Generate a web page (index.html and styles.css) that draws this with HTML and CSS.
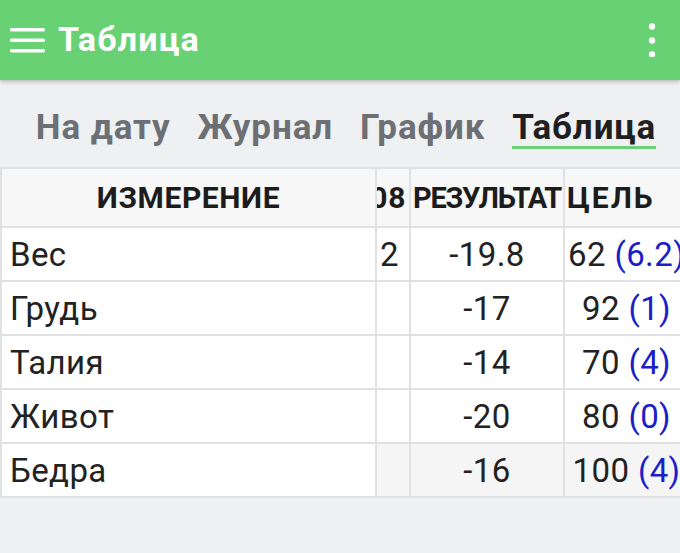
FILE: index.html
```html
<!DOCTYPE html>
<html lang="ru">
<head>
<meta charset="utf-8">
<link rel="stylesheet" href="styles.css">
</head>
<body>
<header class="appbar">
  <svg class="menu" width="36" height="28" viewBox="0 0 36 28"><rect x="0" y="2" width="35" height="3.5" rx="1.5" fill="#fff"/><rect x="0" y="12.5" width="35" height="3.5" rx="1.5" fill="#fff"/><rect x="0" y="23" width="35" height="3.5" rx="1.5" fill="#fff"/></svg>
  <h1 class="title">Таблица</h1>
  <svg class="more" width="8" height="34" viewBox="0 0 8 34"><circle cx="4" cy="3.5" r="3.2" fill="#fff"/><circle cx="4" cy="17.5" r="3.2" fill="#fff"/><circle cx="4" cy="31.5" r="3.2" fill="#fff"/></svg>
</header>
<nav class="tabs">
  <span class="tab">На дату</span>
  <span class="tab">Журнал</span>
  <span class="tab">График</span>
  <span class="tab active">Таблица</span>
</nav>
<div class="tablewrap">
<table class="grid">
  <colgroup><col class="c1"><col class="c2"><col class="c3"><col class="c4"></colgroup>
  <thead>
    <tr><th>ИЗМЕРЕНИЕ</th><th><div class="end">2018-01-08</div></th><th class="reshead">РЕЗУЛЬТАТ</th><th class="goalhead">ЦЕЛЬ</th></tr>
  </thead>
  <tbody>
    <tr><td class="name">Вес</td><td class="left">2</td><td>-19.8</td><td class="goal">62 <span class="diff">(6.2)</span></td></tr>
    <tr><td class="name">Грудь</td><td></td><td>-17</td><td class="goal">92 <span class="diff">(1)</span></td></tr>
    <tr><td class="name">Талия</td><td></td><td>-14</td><td class="goal">70 <span class="diff">(4)</span></td></tr>
    <tr><td class="name">Живот</td><td></td><td>-20</td><td class="goal">80 <span class="diff">(0)</span></td></tr>
    <tr class="shade"><td class="name">Бедра</td><td></td><td>-16</td><td class="goal">100 <span class="diff">(4)</span></td></tr>
  </tbody>
</table>
</div>
</body>
</html>
```
FILE: styles.css
```css
html, body {
  margin: 0;
  padding: 0;
}
body {
  background: #eff0f2;
  font-family: Roboto, "Noto Sans", sans-serif;
  width: 680px;
  height: 553px;
  overflow: hidden;
}
.appbar {
  height: 80px;
  background: #67d174;
  display: flex;
  align-items: center;
  padding: 0 24px 0 10px;
  box-shadow: 0 2px 4px rgba(0,0,0,0.22);
}
.menu {
  display: block;
  margin-right: 12px;
}
.title {
  margin: 0;
  flex: 1;
  color: #fff;
  font-size: 34px;
  letter-spacing: 1.2px;
  font-weight: 700;
  line-height: 1;
  padding-bottom: 2px;
}
.more {
  display: block;
}
.tabs {
  display: flex;
  justify-content: center;
  gap: 27px;
  padding: 30px 0 18px 12px;
}
.tab {
  font-size: 35px;
  letter-spacing: 0.9px;
  font-weight: 700;
  color: #6c6f74;
  line-height: 36px;
  height: 36px;
  border-bottom: 3px solid transparent;
}
.tab.active {
  color: #1f1f1f;
  border-bottom-color: #6ccf7a;
}
.tablewrap {
  width: 680px;
  overflow: hidden;
}
.grid {
  border-collapse: collapse;
  table-layout: fixed;
  width: 688px;
  background: #fff;
  color: #222;
}
.c1 { width: 375px; }
.c2 { width: 34px; }
.c3 { width: 154px; }
.c4 { width: 125px; }
.grid th, .grid td {
  border: 2px solid #e0e1e3;
  padding: 0;
  overflow: hidden;
  white-space: nowrap;
  text-align: center;
}
.grid th {
  height: 57px;
  background: #f7f7f7;
  font-size: 30px;
  letter-spacing: 0.6px;
  font-weight: 700;
  color: #1c1c1c;
}
.grid th.reshead {
  font-size: 29px;
  letter-spacing: -1.2px;
}
.grid th.goalhead {
  text-align: left;
  padding-left: 2px;
  letter-spacing: 2px;
}
.end {
  display: flex;
  justify-content: flex-end;
  overflow: hidden;
  padding-right: 3px;
}
.grid td {
  height: 52px;
  font-size: 33px;
  letter-spacing: 0.4px;
  font-weight: 400;
}
.grid td.name {
  text-align: left;
  padding-left: 8px;
}
.grid td.left {
  text-align: left;
  padding-left: 3px;
}
.shade td {
  background: #f5f5f5;
}
.shade td.name {
  background: #fff;
}
.diff {
  color: #1a20c8;
}
```
